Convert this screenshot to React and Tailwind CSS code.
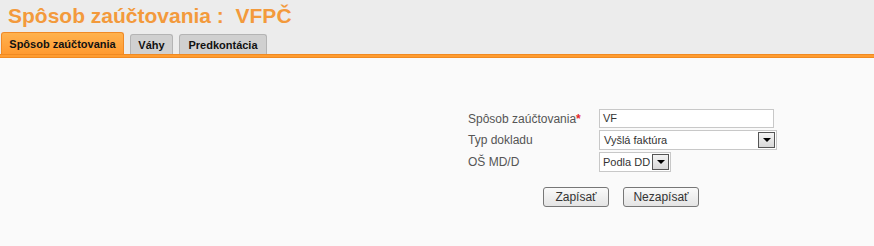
const Arrow = () => (
  <span className="flex h-[16px] w-[17px] shrink-0 items-center justify-center border border-[#555] bg-gradient-to-b from-[#f4f4f4] to-[#d8d8d8]">
    <svg width="8" height="4" viewBox="0 0 8 4">
      <path d="M0 0H8L4 4Z" fill="#000" />
    </svg>
  </span>
);

const tabs = ["Spôsob zaúčtovania", "Váhy", "Predkontácia"];

export default function App() {
  return (
    <div className="h-[246px] w-[874px] bg-[#fafafa] font-['Liberation_Sans',Arial,sans-serif]">
      <div className="bg-[#ececec]">
        <h1 className="h-[32px] pl-[8px] pt-[3px] text-[21px] font-bold leading-[26px] text-[#f39a3c]">
          Spôsob zaúčtovania :&nbsp; VFPČ
        </h1>
        <div className="flex h-[22px] items-end gap-[6px] pl-[1px]">
          {tabs.map((t, i) =>
            i === 0 ? (
              <div
                key={t}
                className="flex h-[22px] w-[123px] items-center justify-center rounded-t-[3px] border border-b-0 border-[#f08a26] bg-gradient-to-b from-[#ffb24e] to-[#ff9a30] pt-[1px] text-[11px] font-bold text-[#111]"
              >
                {t}
              </div>
            ) : (
              <div
                key={t}
                className={`flex h-[20px] items-center justify-center rounded-t-[3px] border border-b-0 border-[#b4b4b4] bg-[#d0d0d0] pt-[1px] text-[11px] font-bold text-[#111] ${
                  i === 1 ? "w-[43px]" : "w-[88px]"
                }`}
              >
                {t}
              </div>
            )
          )}
        </div>
      </div>
      <div className="h-[4px] border-y border-[#f08a22] bg-[#ff9c30]" />

      <div className="pl-[468px] pt-[51px]">
        <div className="text-[12px] text-[#555]">
          <div className="grid grid-cols-[131px_auto] items-center gap-y-[2px]">
            <label>
              Spôsob zaúčtovania<span className="font-bold text-[#e3262b]">*</span>
            </label>
            <div className="flex h-[19px] w-[175px] items-center border border-[#c8c8c8] bg-white px-[3px] text-[11px] text-[#333]">
              VF
            </div>
            <label>Typ dokladu</label>
            <div className="flex h-[20px] w-[178px] items-center justify-between border border-[#c8c8c8] bg-white pl-[4px] pr-[1px] text-[11px] text-[#333]">
              Vyšlá faktúra
              <Arrow />
            </div>
            <label>OŠ MD/D</label>
            <div className="flex h-[20px] w-[72px] items-center justify-between gap-[2px] whitespace-nowrap border border-[#c8c8c8] bg-white pl-[3px] pr-[1px] text-[11px] text-[#333]">
              Podla DD
              <Arrow />
            </div>
          </div>
          <div className="mt-[15px] flex gap-[14px] pl-[75px]">
            <button className="h-[20px] w-[66px] rounded-[3px] border border-[#777] bg-gradient-to-b from-[#fafafa] to-[#e4e4e4] text-[12px] text-[#333]">
              Zapísať
            </button>
            <button className="h-[20px] w-[76px] rounded-[3px] border border-[#777] bg-gradient-to-b from-[#fafafa] to-[#e4e4e4] text-[12px] text-[#333]">
              Nezapísať
            </button>
          </div>
        </div>
      </div>
    </div>
  );
}
